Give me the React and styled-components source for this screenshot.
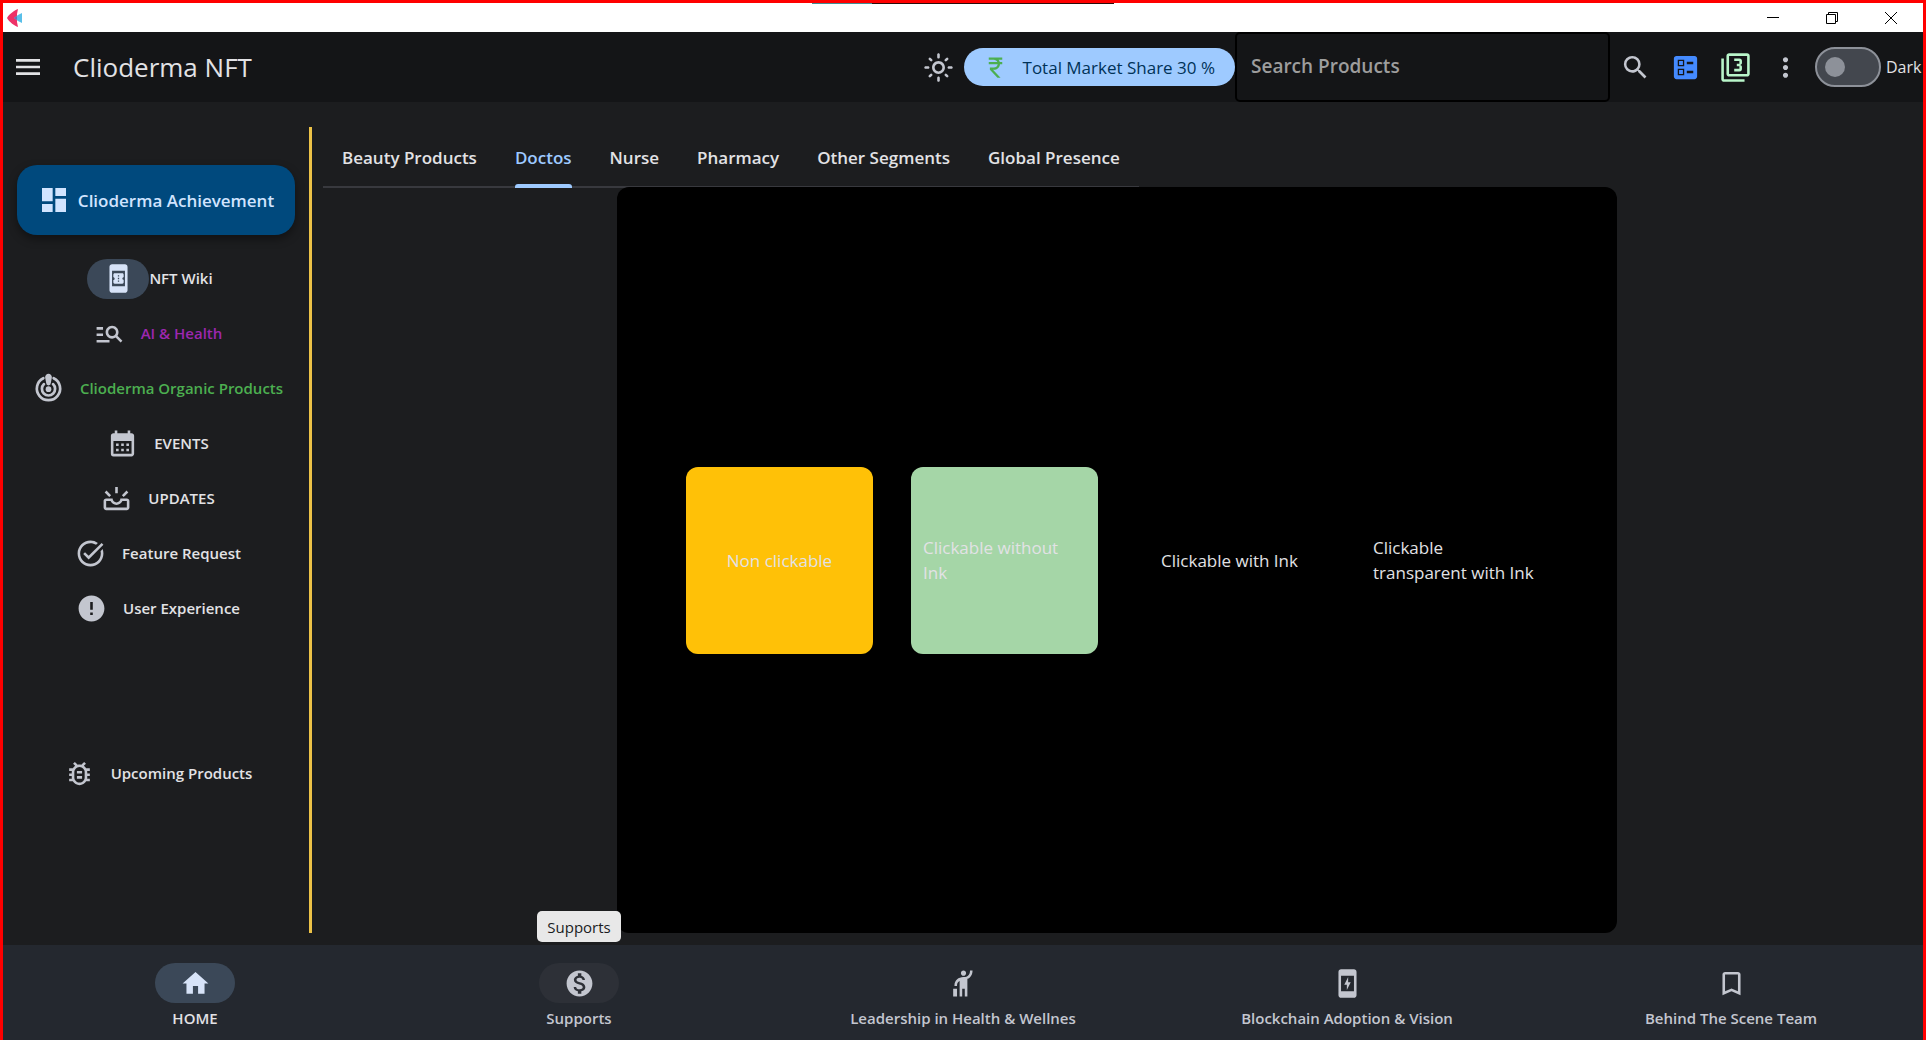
import React from 'react';
import styled, { createGlobalStyle } from 'styled-components';
import {
  MdMenu, MdOutlineLightMode, MdCurrencyRupee, MdSearch, MdBallot, MdFilter3, MdMoreVert,
  MdDashboard, MdBookOnline, MdManageSearch, MdCalendarMonth, MdOutlineUpcoming,
  MdTaskAlt, MdError, MdOutlineBugReport, MdHome, MdMonetizationOn, MdHail, MdChargingStation,
  MdBookmarkBorder,
} from 'react-icons/md';

const GlobalStyle = createGlobalStyle`
  *, *::before, *::after { box-sizing: border-box; }
  body { margin: 0; background: #1a1c1e; }
  button, input { font: inherit; color: inherit; }
  button { padding: 0; border: 0; background: none; cursor: pointer; }
`;

const Window = styled.div`
  display: flex;
  flex-direction: column;
  min-height: 100vh;
  border: 3px solid #ff0000;
  border-bottom: 0;
  background: #1c1d1f;
  color: #e2e2e5;
  font-family: 'Open Sans', 'Noto Sans', sans-serif;
  font-size: 17px;
  line-height: 25px;
  overflow: hidden;
`;

const TitleBar = styled.header`
  display: flex;
  align-items: center;
  justify-content: space-between;
  height: 29px;
  padding: 0 3px 0 4px;
  background:
    linear-gradient(90deg, #3f8f96 60px, #2a0c0c 60px) 50% 0 / 302px 1px no-repeat,
    #ffffff;
`;

const WindowButtons = styled.div`
  display: flex;
`;

const WindowButton = styled.button`
  display: grid;
  place-items: center;
  width: 59px;
  height: 29px;
`;

const AppBar = styled.div`
  display: flex;
  align-items: center;
  height: 70px;
  background: #141517;
  white-space: nowrap;
`;

const IconButton = styled.button`
  display: grid;
  place-items: center;
  flex: none;
  width: 50px;
  height: 50px;
  font-size: ${(p) => p.$size || 31}px;
  color: ${(p) => p.$color || '#c3c6cf'};
`;

const AppTitle = styled.h1`
  flex: 1;
  margin: 0;
  padding-left: 20px;
  font-size: 26px;
  font-weight: 400;
  line-height: 36px;
`;

const ShareButton = styled.button`
  display: flex;
  align-items: center;
  gap: 14px;
  height: 38px;
  padding: 0 20px 0 18px;
  border-radius: 19px;
  background: #9ecaff;
  color: #003258;
  svg { font-size: 27px; color: #4caf50; }
`;

const SearchField = styled.input`
  width: 375px;
  height: 70px;
  padding: 0 14px 2px;
  border: 2px solid #000000;
  border-radius: 5px;
  background: transparent;
  font-size: 19px;
  font-weight: 600;
  outline: 0;
  &::placeholder { color: #9d9d9d; opacity: 1; }
`;

const ThemeSwitch = styled.label`
  display: flex;
  align-items: center;
  gap: 5px;
  width: 113px;
  padding-left: 5px;
  font-size: 16px;
`;

const SwitchInput = styled.input`
  appearance: none;
  display: flex;
  align-items: center;
  flex: none;
  width: 66px;
  height: 40px;
  margin: 0;
  padding-left: 8px;
  border: 2px solid #8d9199;
  border-radius: 20px;
  background: #43474e;
  &::before {
    content: '';
    width: 20px;
    height: 20px;
    border-radius: 50%;
    background: #8d9199;
  }
  &:checked { justify-content: flex-end; padding: 0 8px 0 0; }
`;

const Body = styled.div`
  display: flex;
  flex: 1;
  padding: 25px 0 12px;
`;

const Sidebar = styled.nav`
  display: flex;
  flex-direction: column;
  align-items: center;
  width: 306px;
  padding: 38px 0 0;
`;

const AchievementButton = styled.button`
  display: flex;
  align-items: center;
  justify-content: center;
  gap: 8px;
  width: 278px;
  height: 70px;
  margin-bottom: 16px;
  border-radius: 20px;
  background: #00497d;
  color: #d1e4ff;
  font-weight: 600;
  box-shadow: 0 4px 10px rgba(0, 0, 0, 0.4);
  svg { font-size: 32px; }
`;

const RailList = styled.div`
  display: flex;
  flex-direction: column;
  align-items: center;
  padding-left: 4px;
`;

const RailItem = styled.button`
  display: flex;
  align-items: center;
  gap: ${(p) => (p.$selected ? 0 : 16)}px;
  height: 55px;
  padding-right: ${(p) => (p.$selected ? 16 : 0)}px;
  color: ${(p) => p.$color || '#e2e2e5'};
  font-size: 15px;
  font-weight: 600;
  white-space: nowrap;
  svg { font-size: 31px; color: #c3c6cf; }
`;

const RailSpacer = styled.div`
  height: 110px;
`;

const Indicator = styled.span`
  display: grid;
  place-items: center;
  width: ${(p) => p.$width}px;
  height: 40px;
  border-radius: 20px;
  background: ${(p) => p.$fill || 'transparent'};
  font-size: 31px;
  && svg { color: ${(p) => (p.$active ? '#d7e3f8' : '#c3c6cf')}; }
`;

const Divider = styled.div`
  width: 3px;
  background: #ecc247;
`;

const Main = styled.main`
  display: flex;
  flex: 1;
  flex-direction: column;
  align-items: flex-start;
  padding: 0 12px 0 11px;
`;

const Tabs = styled.div`
  display: flex;
  height: 61px;
  border-bottom: 2px solid #38393e;
`;

const Tab = styled.button`
  height: 61px;
  padding: 0 19px;
  color: ${(p) => (p.$active ? '#9ecaff' : '#e2e2e5')};
  font-weight: 600;
  white-space: nowrap;
`;

const TabLabel = styled.span`
  display: grid;
  grid-template-rows: 1fr 4px;
  align-items: center;
  height: 61px;
  padding-top: 3px;
  &::after {
    content: '';
    height: 4px;
    border-radius: 3px 3px 0 0;
    background: ${(p) => (p.$active ? '#9ecaff' : 'transparent')};
  }
`;

const Stage = styled.section`
  display: flex;
  flex: 1;
  align-items: center;
  align-self: center;
  gap: 38px;
  width: 1000px;
  max-width: 100%;
  margin-top: -1px;
  padding: 0 69px;
  border-radius: 12px;
  background: #000000;
`;

const Card = styled.div`
  display: flex;
  align-items: center;
  justify-content: center;
  width: 187px;
  height: 187px;
  padding: 12px;
  border-radius: 12px;
  background: ${(p) => p.$fill || 'transparent'};
  text-align: left;
`;

const BottomNav = styled.nav`
  display: grid;
  grid-template-columns: repeat(5, 1fr);
  height: 95px;
  background: #24282f;
`;

const Destination = styled.button`
  position: relative;
  display: flex;
  flex-direction: column;
  align-items: center;
  gap: 3px;
  padding-top: 18px;
  color: ${(p) => (p.$active ? '#e2e2e5' : '#c3c6cf')};
  font-size: 15px;
  font-weight: 600;
`;

const Tooltip = styled.span`
  position: absolute;
  bottom: 98px;
  padding: 4px 10px 2px;
  border-radius: 5px;
  background: #e8e8e8;
  color: #1a1c1e;
  font-weight: 400;
`;

function TargetIcon() {
  return (
    <svg width="1em" height="1em" viewBox="0 0 24 24" fill="none" stroke="currentColor" strokeWidth="2.1" strokeLinecap="round" aria-hidden="true">
      <path d="M8 4a9 9 0 1 0 8 0" />
      <path d="M8.500 8.600a5.100 5.100 0 1 0 7 0" />
      <circle cx="12" cy="12.500" r="2.200" fill="currentColor" stroke="none" />
      <path d="M12 .6a2.600 2.600 0 0 1 2.600 2.900l-.8 4.300a1.800 1.800 0 0 1-3.600 0l-.8-4.300A2.600 2.600 0 0 1 12 .6Z" fill="currentColor" stroke="none" />
    </svg>
  );
}

const rail = [
  { label: 'AI & Health', icon: MdManageSearch, color: '#9c27b0' },
  { label: 'Clioderma Organic Products', icon: TargetIcon, color: '#4caf50' },
  { label: 'EVENTS', icon: MdCalendarMonth },
  { label: 'UPDATES', icon: MdOutlineUpcoming },
  { label: 'Feature Request', icon: MdTaskAlt },
  { label: 'User Experience', icon: MdError },
];

const tabs = ['Beauty Products', 'Doctos', 'Nurse', 'Pharmacy', 'Other Segments', 'Global Presence'];

const destinations = [
  { label: 'HOME', icon: MdHome, active: true, fill: '#3b4858' },
  { label: 'Supports', icon: MdMonetizationOn, fill: '#2d3037', tooltip: 'Supports' },
  { label: 'Leadership in Health & Wellnes', icon: MdHail },
  { label: 'Blockchain Adoption & Vision', icon: MdChargingStation },
  { label: 'Behind The Scene Team', icon: MdBookmarkBorder },
];

function FletLogo() {
  return (
    <svg width="16" height="20" viewBox="0 0 16 20" aria-hidden="true">
      <path d="M11 1C8 2 2 6 0 10c2 4 8 8 11 9l-1-5V6Z" fill="#ee3167" />
      <path d="M7 10l4-3 4-2v10l-4-2Z" fill="#59bfe9" />
      <path d="M7 10l3-2v4Z" fill="#6c6fae" />
    </svg>
  );
}

export default function App() {
  return (
    <>
      <GlobalStyle />
      <Window>
        <TitleBar>
          <FletLogo />
          <WindowButtons>
            <WindowButton aria-label="Minimize">
              <svg width="12" height="12" stroke="#000"><path d="M0 5.5h12" /></svg>
            </WindowButton>
            <WindowButton aria-label="Restore">
              <svg width="12" height="12" fill="none" stroke="#000"><path d="M.5 2.500h9v9h-9zM2.500 2.500v-2h9v9h-2" /></svg>
            </WindowButton>
            <WindowButton aria-label="Close">
              <svg width="12" height="12" stroke="#000"><path d="M0 0l12 12M12 0L0 12" /></svg>
            </WindowButton>
          </WindowButtons>
        </TitleBar>
        <AppBar>
          <IconButton aria-label="Menu" $size={32} $color="#e2e2e5"><MdMenu /></IconButton>
          <AppTitle>Clioderma NFT</AppTitle>
          <IconButton aria-label="Toggle brightness"><MdOutlineLightMode /></IconButton>
          <ShareButton><MdCurrencyRupee />Total Market Share 30 %</ShareButton>
          <SearchField aria-label="Search Products" placeholder="Search Products" />
          <IconButton aria-label="Search"><MdSearch /></IconButton>
          <IconButton aria-label="Ballot" $color="#448aff"><MdBallot /></IconButton>
          <IconButton aria-label="Filter" $color="#b9f6ca"><MdFilter3 /></IconButton>
          <IconButton aria-label="More"><MdMoreVert /></IconButton>
          <ThemeSwitch><SwitchInput type="checkbox" role="switch" />Dark</ThemeSwitch>
        </AppBar>
        <Body>
          <Sidebar>
            <AchievementButton><MdDashboard />Clioderma Achievement</AchievementButton>
            <RailList>
              <RailItem $selected>
                <Indicator $width={62} $fill="#3b4858" $active><MdBookOnline /></Indicator>
                NFT Wiki
              </RailItem>
              {rail.map(({ label, icon: Icon, color }) => (
                <RailItem key={label} $color={color}><Icon />{label}</RailItem>
              ))}
              <RailSpacer />
              <RailItem><MdOutlineBugReport />Upcoming Products</RailItem>
            </RailList>
          </Sidebar>
          <Divider />
          <Main>
            <Tabs role="tablist">
              {tabs.map((label) => (
                <Tab key={label} role="tab" aria-selected={label === 'Doctos'} $active={label === 'Doctos'}>
                  <TabLabel $active={label === 'Doctos'}>{label}</TabLabel>
                </Tab>
              ))}
            </Tabs>
            <Stage>
              <Card $fill="#ffc107">Non clickable</Card>
              <Card as="button" $fill="#a5d6a7">Clickable without Ink</Card>
              <Card as="button">Clickable with Ink</Card>
              <Card as="button">Clickable transparent with Ink</Card>
            </Stage>
          </Main>
        </Body>
        <BottomNav>
          {destinations.map(({ label, icon: Icon, active, fill, tooltip }) => (
            <Destination key={label} $active={active}>
              {tooltip && <Tooltip role="tooltip">{tooltip}</Tooltip>}
              <Indicator $width={80} $fill={fill} $active={active}><Icon /></Indicator>
              {label}
            </Destination>
          ))}
        </BottomNav>
      </Window>
    </>
  );
}
